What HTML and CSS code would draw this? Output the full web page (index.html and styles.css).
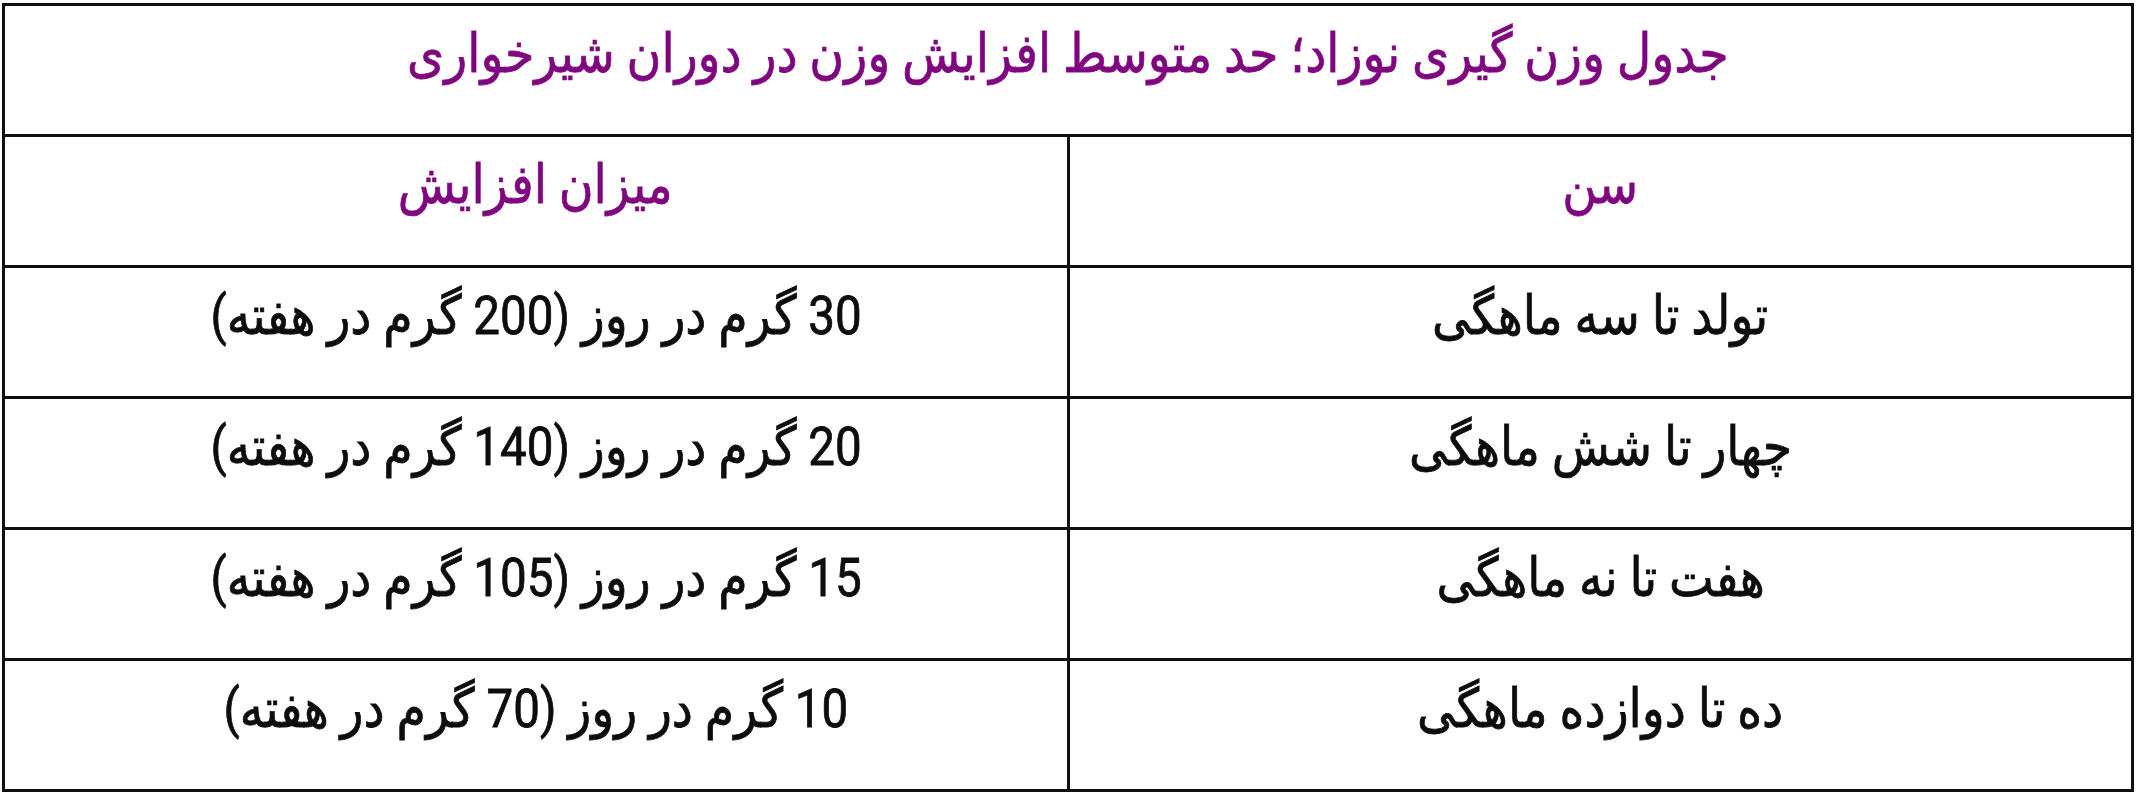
FILE: index.html
```html
<!DOCTYPE html>
<html lang="fa" dir="rtl">
<head>
<meta charset="utf-8">
<title>جدول وزن گیری نوزاد</title>
<link rel="stylesheet" href="styles.css">
</head>
<body>
<div class="wrap">
<table class="weight">
  <tr><td colspan="2" class="title"><span class="t">جدول وزن گیری نوزاد؛ حد متوسط افزایش وزن در دوران شیرخواری</span></td></tr>
  <tr><td class="head"><span class="t">سن</span></td><td class="head"><span class="t">میزان افزایش</span></td></tr>
  <tr><td><span class="t">تولد تا سه ماهگی</span></td><td><span class="t">30 گرم در روز (200 گرم در هفته)</span></td></tr>
  <tr><td><span class="t">چهار تا شش ماهگی</span></td><td><span class="t">20 گرم در روز (140 گرم در هفته)</span></td></tr>
  <tr><td><span class="t">هفت تا نه ماهگی</span></td><td><span class="t">15 گرم در روز (105 گرم در هفته)</span></td></tr>
  <tr><td><span class="t">ده تا دوازده ماهگی</span></td><td><span class="t">10 گرم در روز (70 گرم در هفته)</span></td></tr>
</table>
</div>
</body>
</html>
```

FILE: styles.css
```css
html, body {
  margin: 0;
  padding: 0;
  background: #ffffff;
}
.wrap {
  padding: 3px 5px 0 2px;
}
.weight {
  width: 100%;
  border-collapse: collapse;
  table-layout: fixed;
  font-family: Roboto, "DejaVu Sans", sans-serif;
  font-size: 54px;
  color: #0d0d0d;
}
.weight td {
  border: 3px solid #0f0f0f;
  text-align: center;
  vertical-align: middle;
  width: 50%;
  height: 131px;
  box-sizing: border-box;
  padding: 0 10px 32px;
  line-height: 1.2;
}
.t {
  display: inline-block;
  white-space: nowrap;
  transform: scaleX(0.88);
  -webkit-text-stroke: 0.8px currentColor;
}
.title, .head {
  color: #7f067f;
}
```
